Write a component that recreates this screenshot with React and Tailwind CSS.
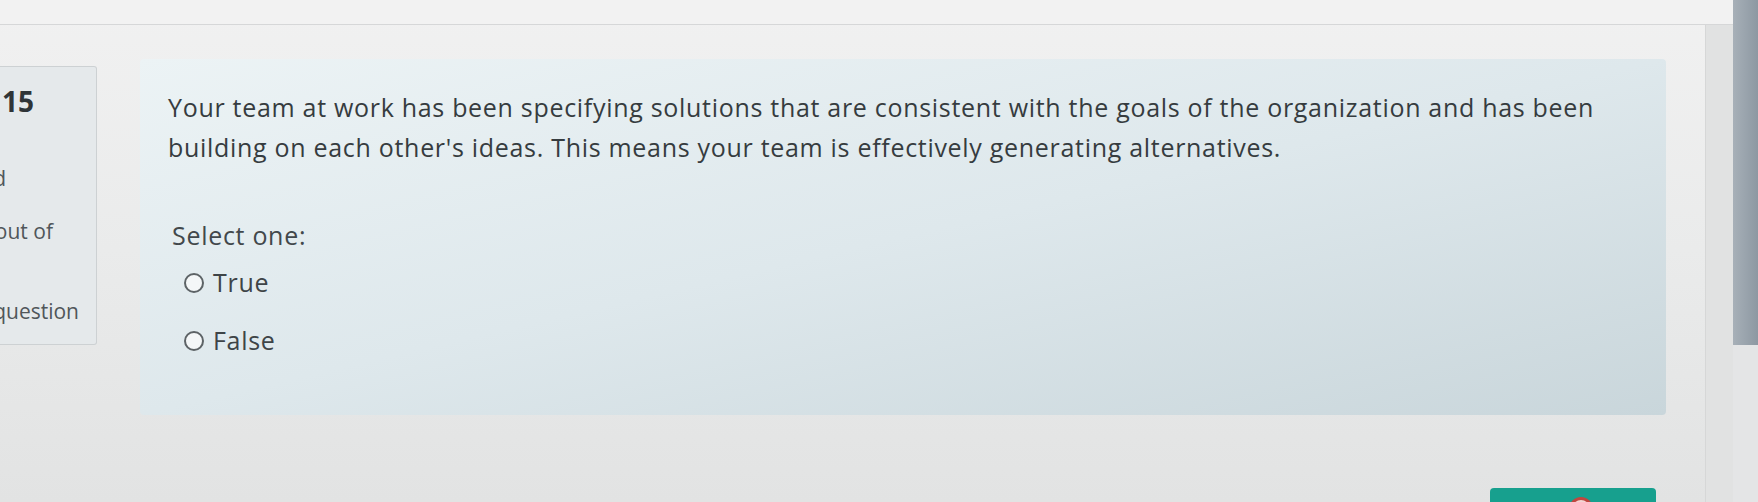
import React from 'react';

const font = { fontFamily: '"Open Sans", "Noto Sans", sans-serif' };

const InfoLine = ({ end, className, children }) => (
  <div className={`flex justify-end whitespace-nowrap ${end} ${className}`}>{children}</div>
);

const Radio = ({ label }) => (
  <label className="flex items-center gap-[9px] h-[32px]">
    <span className="w-[20px] h-[20px] rounded-full border-[2px] border-[#5d6366] bg-[#f4f7f8]" />
    <span>{label}</span>
  </label>
);

const App = () => {
  return (
    <div style={font} className="w-[1758px] h-[502px] overflow-hidden flex bg-[#e6e7e7] text-[#3b4144]">
      {/* page */}
      <div className="flex-1 flex flex-col bg-linear-to-b from-[#f1f1f1] via-[#eaebeb] to-[#e2e3e3]">
        <div className="h-[25px] shrink-0 border-b border-[#d6d7d8] bg-[#f2f2f2]" />

        <div className="flex-1 flex">
          {/* quiz card */}
          <div className="w-[1706px] flex-none border-r border-[#d6d7d7] relative">
            <div className="flex items-start pt-[34px]">
              {/* question info, clipped on the left */}
              <div className="w-[97px] h-[279px] mt-[7px] flex-none overflow-hidden border border-l-0 border-[#cdd1d3] rounded-r-[3px] bg-[#e5e9eb]">
                <InfoLine end="w-[34px]" className="mt-[18px] text-[28px] font-bold leading-[32px] text-[#2f3437]">Question 15</InfoLine>
                <InfoLine end="w-[6px]" className="mt-[48px] text-[21px] leading-[26px] text-[#50565a]">answered</InfoLine>
                <InfoLine end="w-[53px]" className="mt-[27px] text-[21px] leading-[26px] text-[#50565a]">Marked out of</InfoLine>
                <InfoLine end="w-[79px]" className="mt-[54px] text-[21px] leading-[26px] text-[#50565a]">Flag question</InfoLine>
              </div>

              {/* formulation */}
              <div className="ml-[43px] w-[1526px] h-[356px] flex-none rounded-[4px] bg-linear-to-br from-[#ecf3f5] via-[#dee8ec] to-[#c9d6db] pl-[28px] pt-[28px] text-[25px] tracking-[0.7px]">
                <p className="leading-[40px] max-w-[1470px] text-[#363c3f]">
                  Your team at work has been specifying solutions that are consistent with the goals of the organization and has been building on each other's ideas. This means your team is effectively generating alternatives.
                </p>
                <div className="mt-[52px] pl-[4px] leading-[32px] text-[#42484b]">Select one:</div>
                <div className="mt-[16px] pl-[16px] flex flex-col gap-[26px] text-[#3e4447]">
                  <Radio label="True" />
                  <Radio label="False" />
                </div>
              </div>
            </div>

            {/* next page button peeking in at the bottom */}
            <div className="absolute left-[1490px] top-[463px] w-[166px] h-[40px] rounded-t-[4px] bg-[#17a08e] flex justify-center">
              <span className="mt-[9px] ml-[16px] w-[24px] h-[24px] rounded-full border-[3px] border-[#c0463f] bg-[#f3d6d3]" />
            </div>
          </div>
          <div className="flex-1 bg-[#e1e2e2]" />
        </div>
      </div>

      {/* scrollbar */}
      <div className="w-[25px] flex flex-col bg-[#e4e5e6]">
        <div className="h-[345px] bg-linear-to-r from-[#a7b0b8] to-[#8d98a2]" />
      </div>
    </div>
  );
};

export default App;
